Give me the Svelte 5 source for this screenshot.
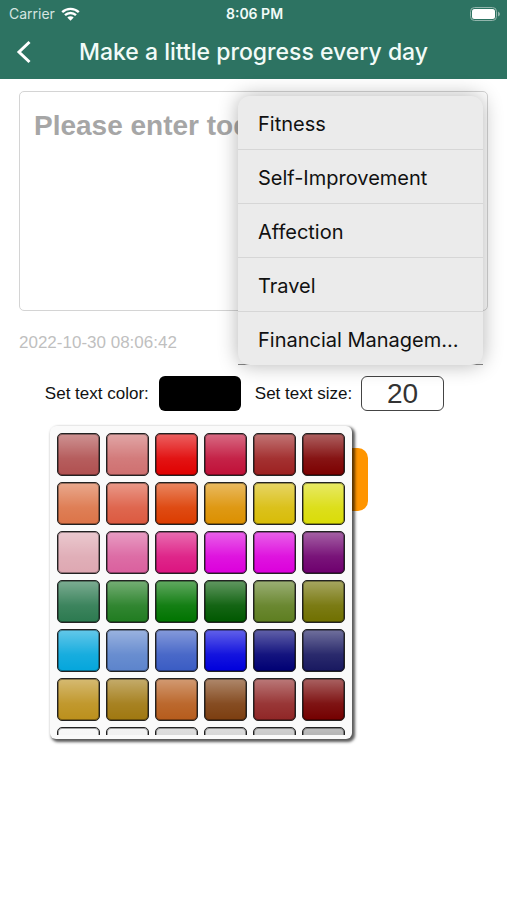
<script lang="ts">
  let entry = $state('');
  let textSize = $state('20');
  let textColor = $state('#000000');
  let category = $state('');

  const categories = ['Fitness', 'Self-Improvement', 'Affection', 'Travel', 'Financial Management'];

  const swatches = [
    '#b05050', '#cf7070', '#e00000', '#c01038', '#9c2020', '#7c0000',
    '#dc7448', '#dc5a40', '#dc3c00', '#dc9000', '#d8bc08', '#dadc08',
    '#dea8b2', '#da609e', '#dc1480', '#dc00dc', '#dc00dc', '#6e006e',
    '#2c7a50', '#207c20', '#007400', '#005800', '#5e7e20', '#707000',
    '#04a6dc', '#5c84cc', '#3a5cc4', '#0000dc', '#000074', '#181860',
    '#bc901c', '#a07810', '#b65c1c', '#7c3e10', '#902626', '#740000',
    '#f4f4f4', '#ececec', '#cccccc', '#c8c8c8', '#b4b4b4', '#989898'
  ];
</script>

<div class="screen">
  <header>
    <div class="status">
      <span class="carrier">
        Carrier
        <svg width="19" height="14" viewBox="0 0 19 14" aria-hidden="true">
          <path d="M1.2 5.2a12 12 0 0 1 16.6 0" />
          <path d="M4 8.2a8 8 0 0 1 11 0" />
          <path class="dot" d="M9.500 13.800L6.300 10.600a4.600 4.600 0 0 1 6.400 0z" />
        </svg>
      </span>
      <span class="time">8:06 PM</span>
      <svg class="battery" width="30" height="14" viewBox="0 0 30 14" aria-hidden="true">
        <rect class="shell" x="0.500" y="0.500" width="26" height="13" rx="4" />
        <rect class="charge" x="2" y="2" width="23" height="10" rx="2.500" />
        <path class="tip" d="M28 4.500q2 1 2 2.500t-2 2.500z" />
      </svg>
    </div>
    <nav>
      <button class="back" aria-label="Back">
        <svg width="16" height="24" viewBox="0 0 16 24"><path d="M13.500 2L3 12l10.500 10" /></svg>
      </button>
      <h1>Make a little progress every day</h1>
    </nav>
  </header>

  <main>
    <textarea bind:value={entry} placeholder="Please enter today" aria-label="Entry"></textarea>

    <div class="meta">
      <time datetime="2022-10-30T08:06:42">2022-10-30 08:06:42</time>
      <div class="category">
        <ul>
          {#each categories as name}
            <li><button onclick={() => (category = name)}>{name}</button></li>
          {/each}
        </ul>
      </div>
    </div>

    <div class="settings">
      <label for="color">Set text color:</label>
      <button id="color" class="color" style="background-color: {textColor}" aria-label="Text color"></button>
      <label for="size">Set text size:</label>
      <input id="size" inputmode="numeric" bind:value={textSize} />
    </div>

    <div class="actions">
      <button class="save" aria-label="Save"></button>
      <div class="palette">
        <div class="grid">
          {#each swatches as color}
            <button
              class="swatch"
              style="background-color: {color}"
              aria-label={color}
              onclick={() => (textColor = color)}
            ></button>
          {/each}
        </div>
      </div>
    </div>
  </main>
</div>

<style>
  :global(body) { margin: 0; background: #fff; }
  * { box-sizing: border-box; }
  button { padding: 0; border: 0; background: none; font: inherit; color: inherit; cursor: pointer; }

  .screen { min-height: 100vh; font-family: 'Liberation Sans', Arial, sans-serif; color: #111; }

  header { height: 79px; background: #2d7362; color: #f2fbf8; font-family: Inter, sans-serif; }
  .status { display: grid; grid-template-columns: 1fr auto 1fr; align-items: center; height: 27px; padding: 0 7px 0 9px; font-size: 14px; }
  .carrier { display: flex; align-items: center; gap: 6px; color: #d5e5e0; }
  .carrier path { fill: none; stroke: #fff; stroke-width: 2.4; }
  .carrier .dot { fill: #fff; stroke: none; }
  .time { font-weight: 600; }
  .battery { justify-self: end; }
  .shell { fill: none; stroke: #92b5ac; }
  .charge { fill: #fff; }
  .tip { fill: #92b5ac; }

  nav { display: grid; grid-template-columns: 48px 1fr 48px; align-items: center; height: 50px; }
  .back { display: flex; justify-content: center; }
  .back path { fill: none; stroke: #fff; stroke-width: 3; }
  h1 { margin: 0; font-size: 23px; line-height: 28px; font-weight: 500; text-align: center; white-space: nowrap; }

  main { padding: 12px 19px 0; }
  textarea { display: block; width: 100%; height: 220px; padding: 16px 14px; border: 1px solid #d4d4d4; border-radius: 5px; outline: 0; resize: none; background: #fff; font: bold 28px/36px 'Liberation Sans', Arial, sans-serif; }
  textarea::placeholder { color: #a6a6a6; opacity: 1; }

  .meta { display: flex; justify-content: space-between; height: 54px; padding-right: 5px; }
  time { padding-top: 22px; font-size: 17px; line-height: 20px; color: #bfbfbf; }
  .category { position: relative; width: 245px; border-bottom: 1px solid #888; }
  ul { position: absolute; right: 0; bottom: -1px; width: 100%; margin: 0; padding: 0; list-style: none; overflow: hidden; border-radius: 12px; background: #ebebeb; box-shadow: 0 0 20px rgba(0, 0, 0, 0.3); font-family: Inter, sans-serif; }
  li + li { border-top: 1px solid #d6d6d6; }
  li button { display: block; width: 100%; height: 53px; padding: 2px 20px 0; overflow: hidden; font-size: 20px; text-align: left; text-overflow: ellipsis; white-space: nowrap; }

  .settings { display: flex; align-items: center; justify-content: center; padding: 11px 18px 0 0; font-size: 17px; }
  .color { width: 82px; height: 35px; margin: 0 14px 0 10px; border-radius: 6px; }
  input { width: 83px; height: 35px; margin-left: 9px; padding: 0; border: 1px solid #444; border-radius: 6px; background: #fff; font: 28px/32px 'Liberation Sans', Arial, sans-serif; color: #333; text-align: center; }

  .actions { position: relative; display: flex; justify-content: center; padding-top: 37px; }
  .save { width: 229px; height: 63px; border-radius: 10px; background: #ff9500; }
  .palette { position: absolute; top: 15px; left: 31px; width: 302px; height: 313px; padding: 7px 7px 4px; border-radius: 6px; background: #fafafa; box-shadow: 2px 2px 3px 1px rgba(0, 0, 0, 0.65); }
  .grid { display: grid; grid-template-columns: repeat(6, 1fr); grid-auto-rows: 43px; gap: 6px; height: 100%; overflow: hidden; }
  .swatch { border: 1px solid #222; border-radius: 5px; background-image: linear-gradient(rgba(255, 255, 255, 0.38), rgba(255, 255, 255, 0.08) 60%, rgba(255, 255, 255, 0)); box-shadow: inset 0 0 0 1px rgba(0, 0, 0, 0.35); }
</style>
